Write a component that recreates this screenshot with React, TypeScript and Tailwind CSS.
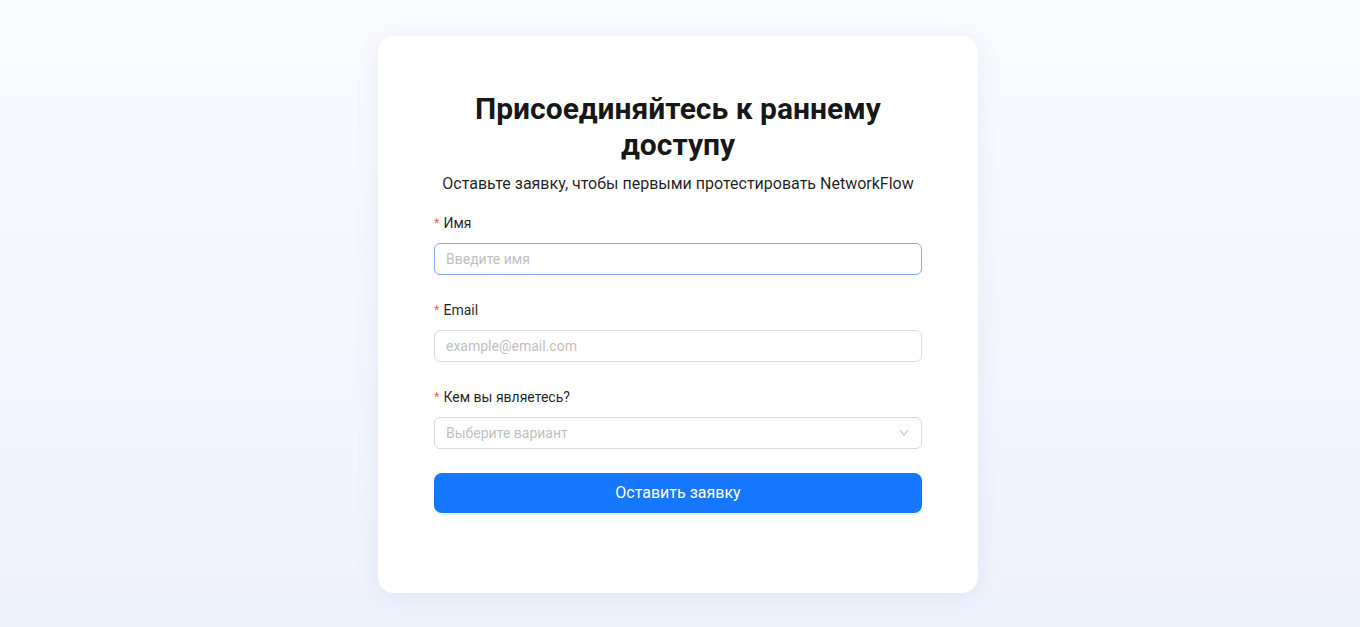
import React from "react";

function Label({ text }: { text: string }) {
  return (
    <div className="pb-[9px] text-[14px] leading-[22px] text-[rgba(0,0,0,0.88)]">
      <span className="mr-1 text-[#ff4d4f] font-['SimSun','Liberation_Sans',sans-serif]">*</span>
      {text}
    </div>
  );
}

export default function App() {
  return (
    <div className="min-h-[627px] w-full bg-gradient-to-b from-[#fafbff] to-[#eef2fd] flex justify-center pt-9 pb-[34px] pr-1 font-['Roboto',sans-serif]">
      <div className="w-[600px] bg-white rounded-2xl shadow-[0_4px_24px_rgba(40,60,140,0.08)] px-14 pt-[55px] pb-[29px]">
        <h1 className="text-center text-[30px] leading-[36px] font-bold text-[rgba(0,0,0,0.92)] px-8">
          Присоединяйтесь к раннему доступу
        </h1>
        <p className="mt-[9px] text-center text-[16px] leading-[24px] text-[rgba(0,0,0,0.88)]">
          Оставьте заявку, чтобы первыми протестировать NetworkFlow
        </p>
        <form className="mt-[16px]" onSubmit={(e) => e.preventDefault()}>
          <div className="mb-6">
            <Label text="Имя" />
            <input
              placeholder="Введите имя"
              className="block w-full h-8 rounded-md border border-[#79adf4] px-[11px] text-[14px] outline-none placeholder:text-[#bfbfbf]"
            />
          </div>
          <div className="mb-6">
            <Label text="Email" />
            <input
              placeholder="example@email.com"
              className="block w-full h-8 rounded-md border border-[#d9d9d9] px-[11px] text-[14px] outline-none placeholder:text-[#bfbfbf]"
            />
          </div>
          <div className="mb-6">
            <Label text="Кем вы являетесь?" />
            <div className="flex items-center h-8 rounded-md border border-[#d9d9d9] px-[11px] text-[14px] text-[#bfbfbf]">
              <span className="flex-1">Выберите вариант</span>
              <svg width="12" height="12" viewBox="0 0 1024 1024" fill="#bfbfbf">
                <path d="M884 256h-75c-5.1 0-9.9 2.5-12.9 6.6L512 654.2 227.9 262.6c-3-4.1-7.8-6.6-12.9-6.6h-75c-6.5 0-10.3 7.4-6.5 12.7l352.6 486.1c12.8 17.6 39 17.6 51.7 0l352.6-486.1c3.9-5.3.1-12.7-6.4-12.7z" />
              </svg>
            </div>
          </div>
          <div className="mb-6">
            <button
              type="submit"
              className="w-full h-10 rounded-lg bg-[#1677ff] text-white text-[16px] shadow-[0_2px_0_rgba(5,145,255,0.1)]"
            >
              Оставить заявку
            </button>
          </div>
        </form>
      </div>
    </div>
  );
}
